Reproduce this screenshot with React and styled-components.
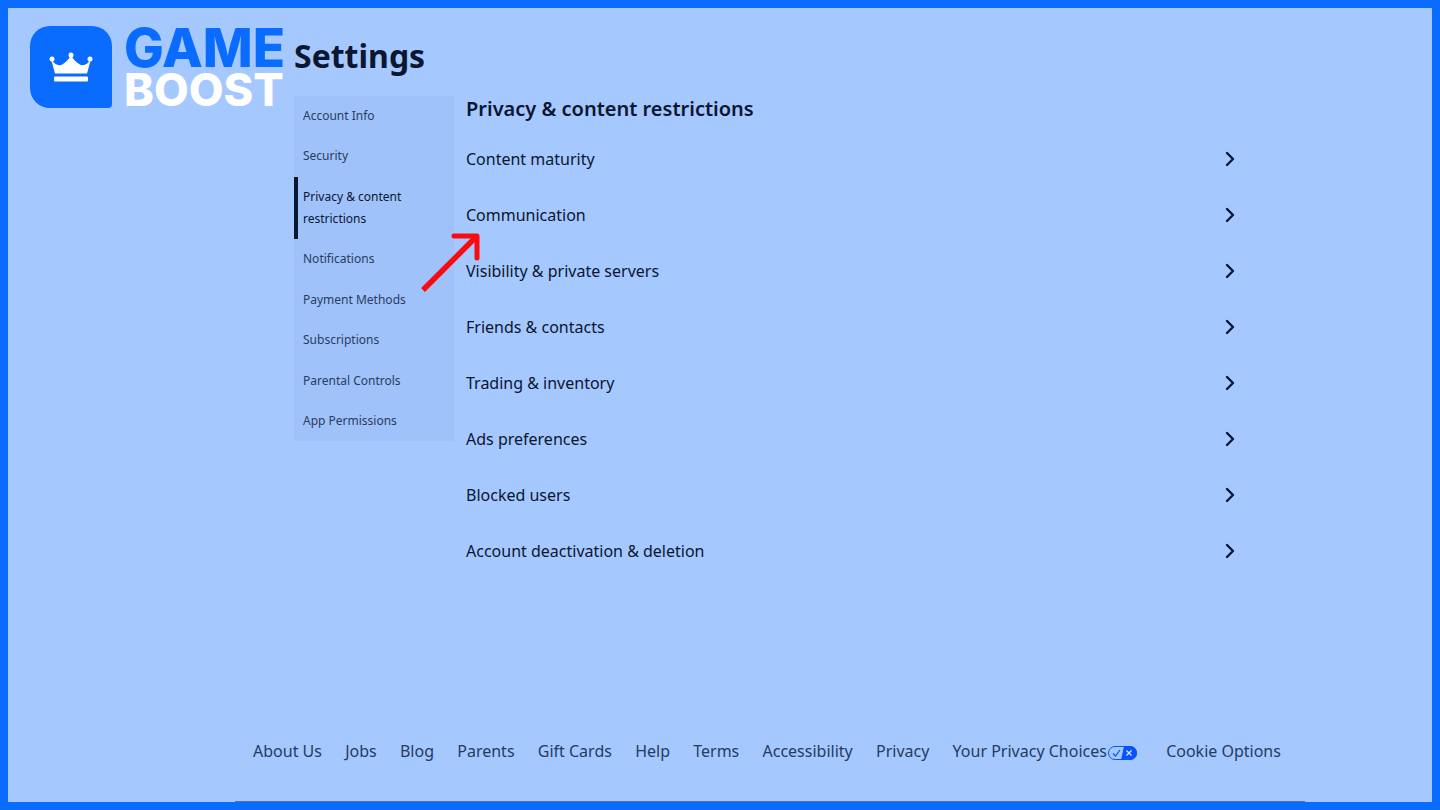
import styled, { createGlobalStyle } from "styled-components";

const GlobalStyle = createGlobalStyle`
  * {
    box-sizing: border-box;
  }
  body {
    margin: 0;
    background: #a5c8ff;
    color: #0b1630;
    font-family: "Noto Sans", "Open Sans", sans-serif;
  }
`;

const Page = styled.div`
  position: relative;
  display: flex;
  flex-direction: column;
  align-items: center;
  min-height: 100vh;
  padding-left: 100px;
  border: 8px solid #0a6cff;
`;
const Brand = styled.a`
  position: absolute;
  top: 18px;
  left: 22px;
  display: flex;
  align-items: flex-start;
  gap: 12px;
  text-decoration: none;
`;
const BrandBadge = styled.span`
  display: flex;
  align-items: center;
  justify-content: center;
  width: 82px;
  height: 82px;
  border-radius: 20px 20px 4px 20px;
  background: #0a6cff;
`;
const BrandName = styled.span`
  display: flex;
  flex-direction: column;
  padding-top: 1px;
  font-family: Inter, "Liberation Sans", sans-serif;
  font-weight: 800;
`;
const BrandWord = styled.span`
  color: ${(props) => props.$color};
  font-size: ${(props) => props.$size};
  line-height: 42px;
`;
const Content = styled.main`
  flex: 1;
  width: 100%;
  max-width: 952px;
  padding-top: 24px;
`;
const Title = styled.h1`
  margin: 0 0 16px;
  font-size: 32px;
  font-weight: 750;
  line-height: 48px;
`;
const Columns = styled.div`
  display: flex;
  align-items: flex-start;
  gap: 12px;
`;
const SideNav = styled.nav`
  display: flex;
  flex-direction: column;
  justify-content: space-between;
  flex: 0 0 160px;
  min-height: 345px;
  background: #a0c2fa;
`;
const SideLink = styled.a`
  padding: 9px 24px 9px 5px;
  border-left: 4px solid ${(props) => (props.$active ? "#0b1630" : "transparent")};
  color: ${(props) => (props.$active ? "#0b1630" : "#2a3c60")};
  font-size: 12px;
  font-weight: 450;
  line-height: 22px;
  text-decoration: none;
`;
const Panel = styled.section`
  flex: 1;
  min-width: 0;
`;
const PanelTitle = styled.h2`
  margin: 0 0 9px;
  font-size: 20px;
  font-weight: 560;
  line-height: 26px;
`;
const Row = styled.button`
  position: relative;
  display: flex;
  align-items: center;
  justify-content: space-between;
  width: 100%;
  height: 56px;
  padding: 0 10px 0 0;
  border: 0;
  background: none;
  color: inherit;
  font: inherit;
  font-size: 16px;
  font-weight: 450;
  text-align: left;
  cursor: pointer;
`;
const Pointer = styled.svg`
  position: absolute;
  top: 44px;
  left: -46px;
  z-index: 1;
  pointer-events: none;
`;
const Footer = styled.footer`
  display: flex;
  justify-content: space-between;
  width: 100%;
  max-width: 1070px;
  padding: 0 24px 38px 18px;
  border-bottom: 1px solid #4a74a8;
`;
const FooterLink = styled.a`
  display: flex;
  align-items: center;
  gap: 1px;
  color: #263b62;
  font-size: 16px;
  font-weight: 450;
  line-height: 24px;
  text-decoration: none;
  white-space: nowrap;
`;
const ChoicesIcon = styled.svg`
  margin: 3px 6px 0 0;
`;

const sideItems = [
  "Account Info",
  "Security",
  "Privacy & content restrictions",
  "Notifications",
  "Payment Methods",
  "Subscriptions",
  "Parental Controls",
  "App Permissions",
];

const rows = [
  "Content maturity",
  "Communication",
  "Visibility & private servers",
  "Friends & contacts",
  "Trading & inventory",
  "Ads preferences",
  "Blocked users",
  "Account deactivation & deletion",
];

const footerItems = [
  "About Us",
  "Jobs",
  "Blog",
  "Parents",
  "Gift Cards",
  "Help",
  "Terms",
  "Accessibility",
  "Privacy",
  "Your Privacy Choices",
  "Cookie Options",
];

function Crown() {
  return (
    <svg width="44" height="30" viewBox="0 0 44 30" fill="#fff" aria-hidden="true">
      <path d="M2 7 Q8 16 14 12 Q19 9 22 3 Q25 9 30 12 Q36 16 42 7 L38 21.500 H6 Z" />
      <circle cx="3" cy="7" r="2.500" />
      <circle cx="22" cy="3" r="2.500" />
      <circle cx="41" cy="7" r="2.500" />
      <rect x="5" y="24.500" width="34" height="5" rx="1" />
    </svg>
  );
}

function Chevron() {
  return (
    <svg width="12" height="16" viewBox="0 0 12 16" fill="none" aria-hidden="true">
      <path
        d="M3 2 L9 8 L3 14"
        stroke="#0b1630"
        strokeWidth="2.400"
        strokeLinecap="round"
        strokeLinejoin="round"
      />
    </svg>
  );
}

function RedArrow() {
  return (
    <Pointer width="62" height="62" viewBox="0 0 62 62" fill="none" aria-hidden="true">
      <path d="M3 59 L57 5" stroke="#fc0a10" strokeWidth="5.500" />
      <path
        d="M34 5 H57 V27"
        stroke="#fc0a10"
        strokeWidth="5"
        strokeLinecap="round"
        strokeLinejoin="round"
      />
    </Pointer>
  );
}

function PrivacyChoices() {
  return (
    <ChoicesIcon width="29" height="14" viewBox="0 0 29 14" fill="none" aria-hidden="true">
      <path d="M16 0 H22 A7 7 0 0 1 22 14 H13 Z" fill="#0653ff" />
      <rect x="0.500" y="0.500" width="28" height="13" rx="6.500" stroke="#0653ff" />
      <path d="M5 7.500 L7.500 10 L12 4" stroke="#0653ff" strokeWidth="1.200" />
      <path d="M18.500 4.500 L23.500 9.500 M23.500 4.500 L18.500 9.500" stroke="#dbe9ff" strokeWidth="1.200" />
    </ChoicesIcon>
  );
}

function App() {
  return (
    <>
      <GlobalStyle />
      <Page>
        <Content>
          <Title>Settings</Title>
          <Columns>
            <SideNav aria-label="Settings">
              {sideItems.map((item, i) => (
                <SideLink key={item} href="#" $active={i === 2}>
                  {item}
                </SideLink>
              ))}
            </SideNav>
            <Panel>
              <PanelTitle>Privacy & content restrictions</PanelTitle>
              {rows.map((item) => (
                <Row key={item} type="button">
                  {item}
                  <Chevron />
                  {item === "Communication" && <RedArrow />}
                </Row>
              ))}
            </Panel>
          </Columns>
        </Content>
        <Footer>
          {footerItems.map((item) => (
            <FooterLink key={item} href="#">
              {item}
              {item === "Your Privacy Choices" && <PrivacyChoices />}
            </FooterLink>
          ))}
        </Footer>
        <Brand href="#">
          <BrandBadge>
            <Crown />
          </BrandBadge>
          <BrandName>
            <BrandWord $color="#0a6cff" $size="53px">
              GAME
            </BrandWord>
            <BrandWord $color="#fff" $size="45px">
              BOOST
            </BrandWord>
          </BrandName>
        </Brand>
      </Page>
    </>
  );
}

export default App;
